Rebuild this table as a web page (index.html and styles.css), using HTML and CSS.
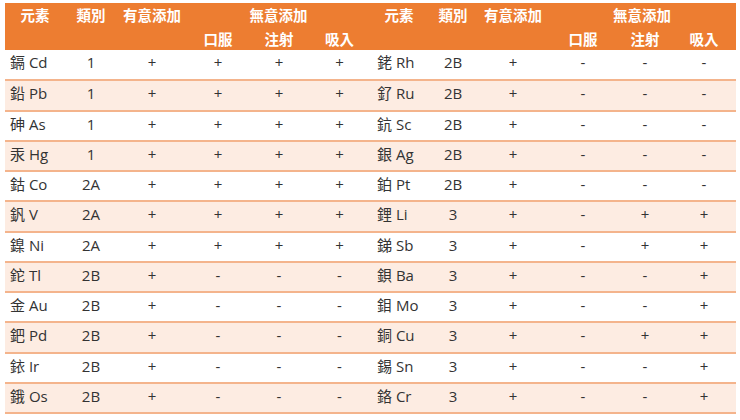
FILE: index.html
```html
<!DOCTYPE html>
<html lang="zh-Hant">
<head>
<meta charset="utf-8">
<title>元素分類表</title>
<link rel="stylesheet" href="styles.css">
</head>
<body>
<table class="tbl">
  <colgroup>
    <col class="c1"><col class="c2"><col class="c3"><col class="c4"><col class="c5"><col class="c6">
    <col class="c7"><col class="c8"><col class="c9"><col class="c10"><col class="c11"><col class="c12">
  </colgroup>
  <thead>
    <tr class="h1">
      <th rowspan="2" class="top">元素</th>
      <th rowspan="2" class="top">類別</th>
      <th rowspan="2" class="top">有意添加</th>
      <th colspan="3">無意添加</th>
      <th rowspan="2" class="top">元素</th>
      <th rowspan="2" class="top">類別</th>
      <th rowspan="2" class="top">有意添加</th>
      <th colspan="3">無意添加</th>
    </tr>
    <tr class="h2">
      <th>口服</th><th>注射</th><th>吸入</th>
      <th>口服</th><th>注射</th><th>吸入</th>
    </tr>
  </thead>
  <tbody>
    <tr><td class="el">鎘 Cd</td><td>1</td><td>+</td><td>+</td><td>+</td><td>+</td><td class="el er">銠 Rh</td><td>2B</td><td>+</td><td>-</td><td>-</td><td>-</td></tr>
    <tr class="alt"><td class="el">鉛 Pb</td><td>1</td><td>+</td><td>+</td><td>+</td><td>+</td><td class="el er">釕 Ru</td><td>2B</td><td>+</td><td>-</td><td>-</td><td>-</td></tr>
    <tr><td class="el">砷 As</td><td>1</td><td>+</td><td>+</td><td>+</td><td>+</td><td class="el er">鈧 Sc</td><td>2B</td><td>+</td><td>-</td><td>-</td><td>-</td></tr>
    <tr class="alt"><td class="el">汞 Hg</td><td>1</td><td>+</td><td>+</td><td>+</td><td>+</td><td class="el er">銀 Ag</td><td>2B</td><td>+</td><td>-</td><td>-</td><td>-</td></tr>
    <tr><td class="el">鈷 Co</td><td>2A</td><td>+</td><td>+</td><td>+</td><td>+</td><td class="el er">鉑 Pt</td><td>2B</td><td>+</td><td>-</td><td>-</td><td>-</td></tr>
    <tr class="alt"><td class="el">釩 V</td><td>2A</td><td>+</td><td>+</td><td>+</td><td>+</td><td class="el er">鋰 Li</td><td>3</td><td>+</td><td>-</td><td>+</td><td>+</td></tr>
    <tr><td class="el">鎳 Ni</td><td>2A</td><td>+</td><td>+</td><td>+</td><td>+</td><td class="el er">銻 Sb</td><td>3</td><td>+</td><td>-</td><td>+</td><td>+</td></tr>
    <tr class="alt"><td class="el">鉈 Tl</td><td>2B</td><td>+</td><td>-</td><td>-</td><td>-</td><td class="el er">鋇 Ba</td><td>3</td><td>+</td><td>-</td><td>-</td><td>+</td></tr>
    <tr><td class="el">金 Au</td><td>2B</td><td>+</td><td>-</td><td>-</td><td>-</td><td class="el er">鉬 Mo</td><td>3</td><td>+</td><td>-</td><td>-</td><td>+</td></tr>
    <tr class="alt"><td class="el">鈀 Pd</td><td>2B</td><td>+</td><td>-</td><td>-</td><td>-</td><td class="el er">銅 Cu</td><td>3</td><td>+</td><td>-</td><td>+</td><td>+</td></tr>
    <tr><td class="el">銥 Ir</td><td>2B</td><td>+</td><td>-</td><td>-</td><td>-</td><td class="el er">錫 Sn</td><td>3</td><td>+</td><td>-</td><td>-</td><td>+</td></tr>
    <tr class="alt"><td class="el">鋨 Os</td><td>2B</td><td>+</td><td>-</td><td>-</td><td>-</td><td class="el er">鉻 Cr</td><td>3</td><td>+</td><td>-</td><td>-</td><td>+</td></tr>
  </tbody>
</table>
</body>
</html>
```

FILE: styles.css
```css
html, body {
  margin: 0;
  padding: 0;
  background: #ffffff;
}
body {
  padding: 3px 0 0 5px;
  font-family: "Open Sans", "Noto Sans CJK TC", sans-serif;
  color: #333333;
}
.tbl {
  width: 731px;
  border-collapse: collapse;
  table-layout: fixed;
  font-size: 15px;
}
.c1 { width: 60px; }
.c2 { width: 52px; }
.c3 { width: 70px; }
.c4 { width: 62px; }
.c5 { width: 60px; }
.c6 { width: 61px; }
.c7 { width: 58px; }
.c8 { width: 50px; }
.c9 { width: 70px; }
.c10 { width: 70px; }
.c11 { width: 54px; }
.c12 { width: 64px; }

thead th {
  background: #ed7d31;
  color: #ffffff;
  font-weight: bold;
  font-size: 14.5px;
  font-family: "Noto Sans CJK TC", sans-serif;
  padding: 0;
  text-align: center;
}
.h1 th {
  height: 24px;
  line-height: 20px;
  vertical-align: middle;
}
.h1 th.top {
  vertical-align: top;
  padding-top: 2px;
}
.h2 th {
  height: 23px;
  line-height: 20px;
  vertical-align: middle;
}
tbody td {
  height: 30.25px;
  padding: 3px 0 0 0;
  box-sizing: border-box;
  line-height: 19px;
  vertical-align: top;
  text-align: center;
  border-bottom: 2px solid #f4b48c;
}
tbody tr.alt td {
  background: #fdece2;
}
tbody td.el {
  text-align: left;
  padding-left: 5px;
}
tbody td.er {
  padding-left: 7px;
}
```
